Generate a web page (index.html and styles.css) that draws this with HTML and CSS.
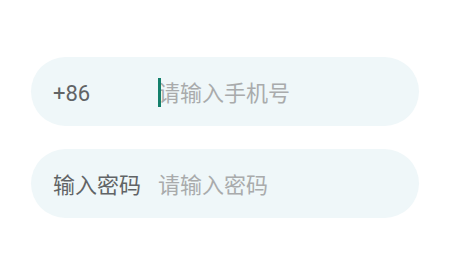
FILE: index.html
```html
<!DOCTYPE html>
<html lang="zh-CN">
<head>
<meta charset="utf-8">
<link rel="stylesheet" href="styles.css">
</head>
<body>
<div class="form">
  <div class="field">
    <span class="label">+86</span>
    <div class="input">
      <span class="caret"></span>
      <span class="placeholder">请输入手机号</span>
    </div>
  </div>
  <div class="field">
    <span class="label">输入密码</span>
    <div class="input">
      <span class="placeholder">请输入密码</span>
    </div>
  </div>
</div>
</body>
</html>
```
FILE: styles.css
```css
html, body {
  margin: 0;
  padding: 0;
  background: #ffffff;
}
body {
  width: 449px;
  height: 253px;
  font-family: Roboto, "Noto Sans CJK SC", sans-serif;
}
.form {
  display: flex;
  flex-direction: column;
  gap: 23px;
  padding: 57px 0 0 31px;
  width: 388px;
}
.field {
  display: flex;
  align-items: center;
  height: 69px;
  border-radius: 35px;
  background: #eff7f9;
  padding-left: 22px;
}
.label {
  width: 105px;
  flex: none;
  font-size: 22px;
  line-height: 32px;
  padding-top: 4px;
  color: #616466;
}
.input {
  display: flex;
  align-items: center;
  position: relative;
  font-size: 22px;
}
.placeholder {
  color: #a9abac;
  line-height: 32px;
  padding-top: 4px;
}
.caret {
  position: absolute;
  left: 0;
  top: 50%;
  width: 3px;
  height: 29px;
  margin-top: -14px;
  background: #14806c;
}
```
